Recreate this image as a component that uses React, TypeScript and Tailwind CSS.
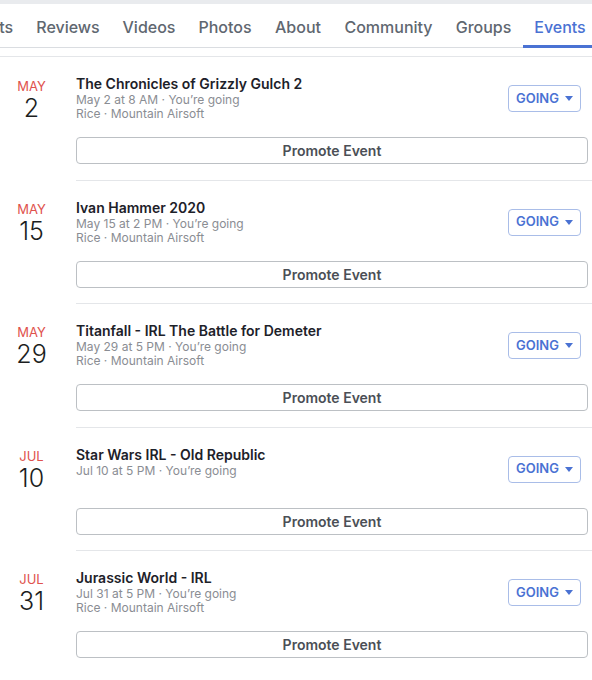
import React from "react";

const tabs = [
  { label: "Posts", w: "w-[66px]" },
  { label: "Reviews", w: "w-[86px]" },
  { label: "Videos", w: "w-[76px]" },
  { label: "Photos", w: "w-[76px]" },
  { label: "About", w: "w-[70px]" },
  { label: "Community", w: "w-[111px]" },
  { label: "Groups", w: "w-[79px]" },
  { label: "Events", w: "w-[74px]", active: true },
];

const events = [
  {
    month: "MAY",
    day: "2",
    title: "The Chronicles of Grizzly Gulch 2",
    when: "May 2 at 8 AM · You’re going",
    where: "Rice · Mountain Airsoft",
  },
  {
    month: "MAY",
    day: "15",
    title: "Ivan Hammer 2020",
    when: "May 15 at 2 PM · You’re going",
    where: "Rice · Mountain Airsoft",
  },
  {
    month: "MAY",
    day: "29",
    title: "Titanfall - IRL The Battle for Demeter",
    when: "May 29 at 5 PM · You’re going",
    where: "Rice · Mountain Airsoft",
  },
  {
    month: "JUL",
    day: "10",
    title: "Star Wars IRL - Old Republic",
    when: "Jul 10 at 5 PM · You’re going",
  },
  {
    month: "JUL",
    day: "31",
    title: "Jurassic World - IRL",
    when: "Jul 31 at 5 PM · You’re going",
    where: "Rice · Mountain Airsoft",
  },
];

export default function App() {
  return (
    <div
      className="min-h-screen w-[592px] overflow-hidden bg-[#e9ebee] pt-[4px]"
      style={{ fontFamily: '"Inter", "Noto Sans", sans-serif' }}
    >
      <div className="bg-white pb-[16px]">
        {/* Tab bar */}
        <div className="flex h-[44px] border-b border-[#dadde1]">
          <div className="-ml-[41px] flex shrink-0">
            {tabs.map((tab) => (
              <div
                key={tab.label}
                className={`${tab.w} flex shrink-0 items-center justify-center text-[16px] font-medium ${
                  tab.active
                    ? "-mb-px border-b-[3px] border-[#4a72d3] pt-[5px] text-[#4a72d3]"
                    : "pt-[3px] text-[#606770]"
                }`}
              >
                {tab.label}
              </div>
            ))}
          </div>
        </div>

        {/* Event list */}
        <div className="mt-[8px]">
          {events.map((ev, i) => (
            <div key={ev.title} className={`flex ${i === 0 ? "border-t border-[#e4e6e9]" : ""}`}>
              {/* Date */}
              <div className="w-[76px] shrink-0 pt-[21px]">
                <div className="w-[63px] text-center">
                  <div className="text-[13px] leading-[16px] text-[#e0524d]">{ev.month}</div>
                  <div className="text-[25px] font-light leading-[28px] text-[#1c1e21]">{ev.day}</div>
                </div>
              </div>

              {/* Details */}
              <div
                className={`flex-1 pr-[4px] pt-[18px] pb-[15.5px] ${
                  i > 0 ? "border-t border-[#e4e6e9]" : ""
                }`}
              >
                <div className="flex h-[62px] items-start justify-between">
                  <div>
                    <div className="text-[14px] font-semibold leading-[18px] text-[#1d2129]">{ev.title}</div>
                    <div className="text-[12px] leading-[14px] text-[#8a8d93]">{ev.when}</div>
                    {ev.where && (
                      <div className="text-[12px] leading-[13px] text-[#8a8d93]">{ev.where}</div>
                    )}
                  </div>
                  <button className="mr-[7px] mt-[10px] flex h-[27px] w-[73px] items-center justify-center gap-[6px] rounded-[4px] border border-[#a9bde8] text-[13px] font-semibold text-[#4a72d3]">
                    GOING
                    <svg width="8" height="5" viewBox="0 0 8 5">
                      <path d="M0 0h8L4 5z" fill="#4a72d3" />
                    </svg>
                  </button>
                </div>
                <button className="flex h-[27px] w-full items-center justify-center rounded-[4px] border border-[#bcc0c4] text-[14px] font-semibold text-[#4b4f56]">
                  Promote Event
                </button>
              </div>
            </div>
          ))}
        </div>
      </div>
    </div>
  );
}
